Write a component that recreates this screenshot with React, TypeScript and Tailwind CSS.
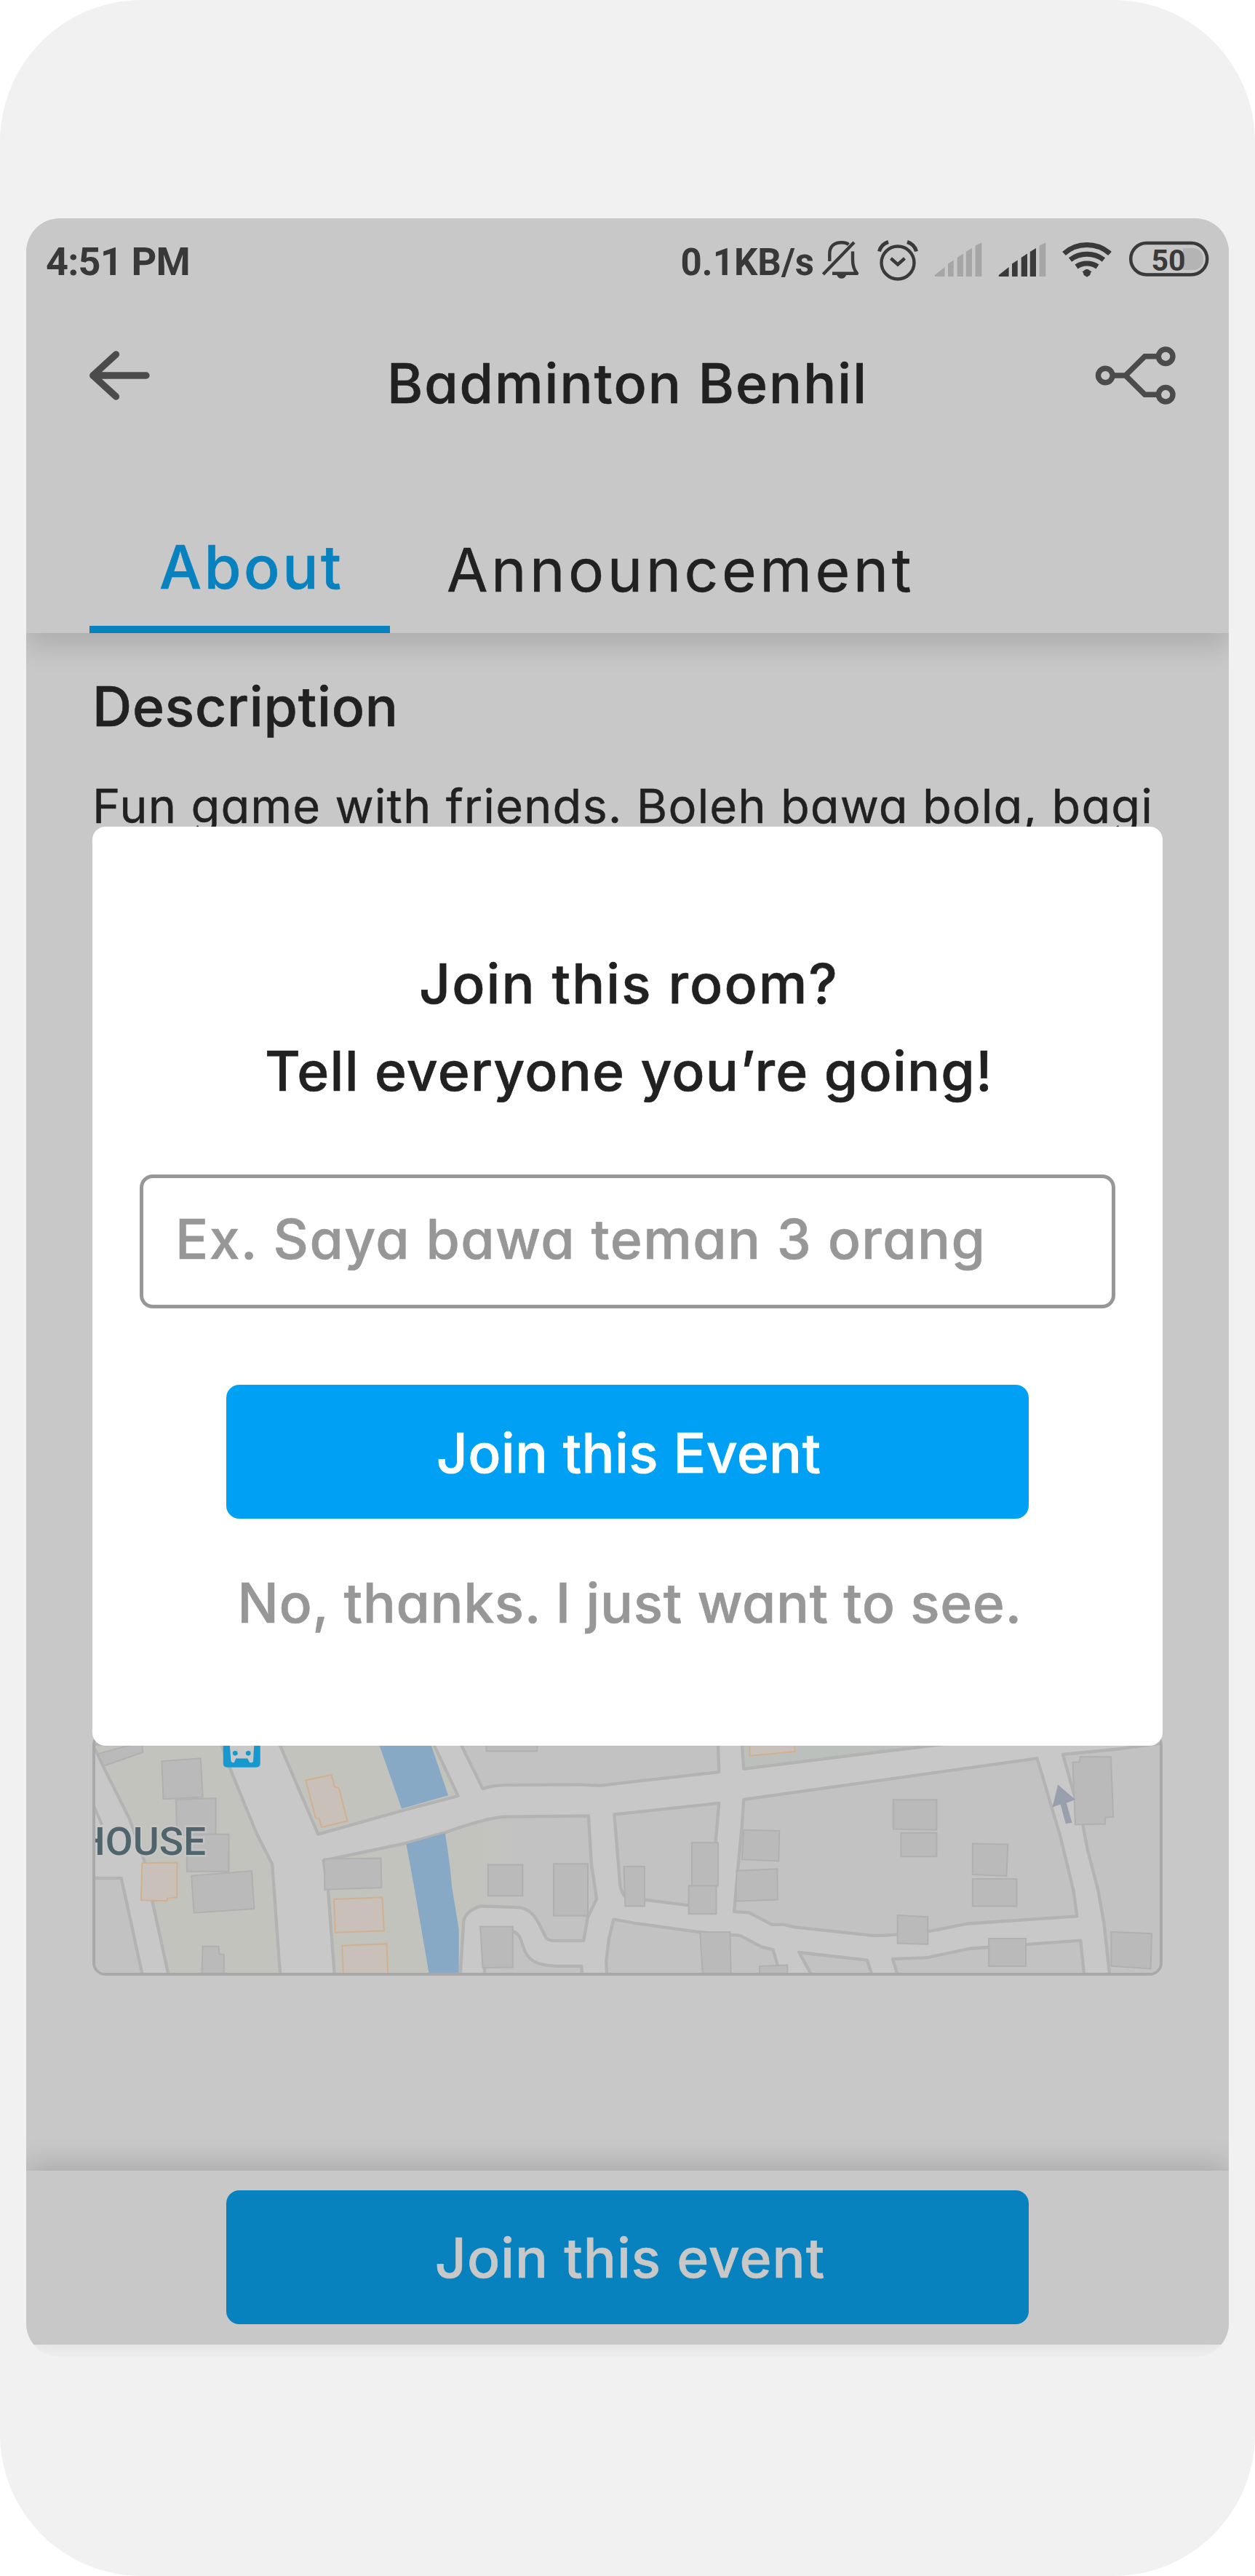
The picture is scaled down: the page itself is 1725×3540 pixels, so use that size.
import type { ReactNode } from "react";

const SANS = "font-['Inter',sans-serif] [font-feature-settings:'cv11'] whitespace-nowrap";
const MEDIUM = "font-medium [-webkit-text-stroke:0.6px_currentColor]";

function BellOff() {
  return (
    <svg className="h-16 w-14" viewBox="0 0 56 64" fill="none" stroke="#3a3a3a" strokeWidth="4.400">
      <path d="M12.3 31V21C12.3 10 19 5.2 28.8 5.2C33 5.2 36 6 38.5 8" />
      <path d="M44 17.5V29C44 38 46 43 50 47.7H16" strokeLinejoin="round" />
      <path d="M3.4 49L46 5" />
      <path d="M22 49.5H35.500C34 53 32 54.700 28.800 54.700C25.500 54.700 23.500 53 22 49.500Z" fill="#3a3a3a" stroke="none" />
    </svg>
  );
}

function Alarm() {
  return (
    <svg className="h-16 w-15" viewBox="0 0 60 64" fill="none" stroke="#3a3a3a" strokeWidth="4.400">
      <circle cx="30" cy="33" r="22.500" />
      <path d="M20.500 27L30 35.500L39.500 27" />
      <path d="M4.500 17.500C6 11.500 10.500 6.500 17 4.500M55.500 17.500C54 11.500 49.500 6.500 43 4.500" strokeWidth="5" />
    </svg>
  );
}

const SIGNAL_BARS = [
  "M0.8 52V50L14.600 39V52Z",
  "M19 52V34.500L26.700 29.500V52Z",
  "M31.700 52V26L40 20.500V52Z",
  "M43.800 52V18L52 13V52Z",
  "M56.500 52V9.500L65.400 5.500V52Z",
];

function Signal({ active }: { active: number }) {
  return (
    <svg className="h-16 w-17" viewBox="0 0 68 64">
      {SIGNAL_BARS.map((d, i) => (
        <path key={d} d={d} fill={i < active ? "#3a3a3a" : "#a6a6a6"} />
      ))}
    </svg>
  );
}

function Wifi() {
  return (
    <svg className="h-16 w-18" viewBox="0 0 72 64" fill="none" stroke="#3a3a3a" strokeWidth="7">
      <path d="M4.500 20.500C22 4.500 50 4.500 67.500 20.500" />
      <path d="M13 29C26.500 18.800 45.500 18.800 59 29" />
      <path d="M21.500 38.500C30 32.600 42 32.600 50.500 38.500" />
      <path d="M29.500 45C33.500 43.200 38.500 43.200 42.500 45L36 53Z" fill="#3a3a3a" stroke="none" />
      <circle cx="36" cy="47" r="5" fill="#3a3a3a" stroke="none" />
    </svg>
  );
}

function Battery() {
  return (
    <svg className="h-16 w-[114px]" viewBox="0 0 114 64">
      <path d="M76 13H90C99 13 104 20 104 28S99 43 90 43H76Z" fill="#b4b4b4" />
      <rect x="4.200" y="6" width="105" height="43.500" rx="21.700" fill="none" stroke="#3a3a3a" strokeWidth="4.500" />
      <text x="56" y="43.500" textAnchor="middle" fontSize="41" fontWeight="700" fill="#3a3a3a" className="font-['Roboto',sans-serif]">
        50
      </text>
    </svg>
  );
}

function StatusBar() {
  return (
    <div className="flex h-[120px] items-center pl-[27px] pr-[25px] font-['Roboto',sans-serif] font-bold text-[#383838]">
      <span className="text-[54px] leading-none tracking-[-0.8px]">4:51 PM</span>
      <span className="ml-auto text-[51px] leading-none">0.1KB/s</span>
      <div className="ml-[9px] flex items-center gap-5">
        <BellOff />
        <Alarm />
        <Signal active={0} />
        <Signal active={4} />
      </div>
      <div className="ml-[18px] flex items-center gap-5">
        <Wifi />
        <Battery />
      </div>
    </div>
  );
}

function Header() {
  return (
    <header className="relative z-10 h-[570px] shrink-0 bg-[#c8c8c8] shadow-[0_18px_37px_rgba(0,0,0,0.14)]">
      <StatusBar />
      <div className="flex h-[192px] items-center pl-[84px] pr-[69px]">
        <svg className="h-20 w-[92px]" viewBox="0 0 92 80" fill="none" stroke="#4b4b4b" strokeWidth="9.300" strokeLinecap="round" strokeLinejoin="round">
          <path d="M39.500 11L7.700 40L39.500 69M8 40H81" />
        </svg>
        <h1 className={`${SANS} ${MEDIUM} ml-[320px] pt-[20px] text-[75px] leading-none tracking-[2px] text-[#212121]`}>
          Badminton Benhil
        </h1>
        <svg className="ml-auto h-[90px] w-[120px]" viewBox="0 0 120 90" fill="none" stroke="#4b4b4b" strokeWidth="7.400">
          <circle cx="19.300" cy="45" r="9.800" />
          <circle cx="102.200" cy="18.800" r="9.800" />
          <circle cx="102.200" cy="71.200" r="9.800" />
          <path d="M29 45H47L73.500 18.800H92M47 45L73.500 71.200H92" />
        </svg>
      </div>
      <nav className={`${SANS} flex h-[258px] pl-[87px] text-[82px] leading-[100px]`}>
        <div className={`${MEDIUM} w-[413px] border-b-10 border-[#0882be] pt-[118px] pl-[96px] tracking-[3.6px] text-[#0882be]`}>
          About
        </div>
        <div className="pt-[122px] pl-[78px] tracking-[4.5px] text-[#212121] [-webkit-text-stroke:0.5px_currentColor]">Announcement</div>
      </nav>
    </header>
  );
}

function Shapes({ list, fill, stroke }: { list: string[]; fill: string; stroke: string }) {
  return (
    <>
      {list.map((points) => (
        <polygon key={points} points={points} fill={fill} stroke={stroke} strokeWidth="2" vectorEffect="non-scaling-stroke" />
      ))}
    </>
  );
}

const BLOCKS: [string, string][] = [
  ["M30 40L45 66L65 130L140 350L182 525L205 695L252 1010H568L545 540L500 410L428 150L400 40Z", "#c3c3bd"],
  ["M20 598H117L178 1010H20Z", "#c2c2c2"],
  ["M566 40L675 415L910 318L1072 255L1003 40Z", "#c3c3bd"],
  ["M1080 40L1142 225Q1170 212 1200 210L1420 208L1475 212L1547 199L1812 155L1809 40Z", "#c2c2c2"],
  ["M1877 40L1882 142L2200 84L2500 30Z", "#bcc0bd"],
  ["M2787 82L2817 240L2844 380L2857 480L2887 650L2904 790L2920 1010H3090V30L2940 60Z", "#c2c2c2"],
  ["M1882 270L2714 98L2779 420L2817 650L2827 757L2517 788L2407 820Q2320 838 2247 838L2027 803L1997 792H1962L1897 742L1855 738L1865 565L1877 380Z", "#c2c2c2"],
  ["M690 525L925 452L1035 408Q1140 352 1200 342L1442 338L1450 540L1465 685L1440 760L1428 860H1350Q1328 860 1322 848L1300 785Q1278 722 1240 720L1135 715Q1095 735 1088 775L1078 1010H722L703 640Z", "url(#park)"],
  ["M1148 1010L1140 810L1227 820Q1243 825 1250 855Q1262 920 1280 938Q1300 962 1350 965H1422L1424 1010Z", "#c2c2c2"],
  ["M1515 332L1570 324L1812 285L1802 450L1800 720L1727 712L1607 690L1545 675Q1532 650 1531 620Z", "#c2c2c2"],
  ["M1513 770L1570 785L1747 822L1872 838L1932 885L1965 897L1988 1010H1494L1492 945L1500 850Z", "#c2c2c2"],
  ["M2039 908L2232 940L2247 1010H2077Z", "#c2c2c2"],
  ["M2304 935L2402 930L2522 892L2837 858L2848 1010H2320Z", "#c2c2c2"],
];

const BUILDINGS = [
  "50,80 175,30 178,73 68,130",
  "232,110 342,98 348,260 236,268",
  "272,270 385,264 385,415 275,420",
  "303,415 422,415 422,570 303,570",
  "316,588 487,568 494,726 323,743",
  "348,883 393,883 395,915 408,917 408,1010 345,1010",
  "692,518 853,515 855,638 694,646",
  "1157,542 1255,542 1255,672 1157,672",
  "1343,538 1440,538 1440,755 1343,755",
  "1135,800 1227,800 1227,970 1142,972",
  "1152,30 1296,30 1296,68 1152,68",
  "1542,550 1601,550 1601,715 1546,715",
  "1735,450 1809,450 1809,630 1735,630",
  "1726,630 1804,630 1804,748 1726,748",
  "1882,397 1983,401 1981,527 1877,520",
  "1862,567 1977,560 1978,688 1860,694",
  "2306,271 2429,271 2429,397 2306,393",
  "2328,409 2429,409 2429,508 2328,508",
  "2531,454 2631,457 2627,589 2531,583",
  "2531,601 2656,601 2656,715 2531,715",
  "2318,753 2404,760 2404,874 2318,870",
  "2577,850 2682,850 2682,966 2577,966",
  "2924,822 3039,830 3036,976 2924,965",
  "2815,115 2834,113 2836,92 2923,92 2930,343 2907,345 2907,372 2822,375",
  "1758,823 1843,823 1846,1010 1766,1010",
  "1927,966 2006,961 2006,1010 1927,1010",
];

const SHOPS = [
  "640,190 713,167 722,218 734,222 758,360 685,386 678,350 668,347",
  "176,535 275,533 275,678 248,682 246,693 173,690",
  "720,686 857,678 862,818 724,825",
  "743,880 870,872 873,1010 747,1010",
  "1899,30 2027,30 2027,70 1899,88",
];

function CityMap() {
  return (
    <div className="h-[335px] w-[1471px] overflow-hidden rounded-[18px] border-4 border-[#a9a9a9]">
      <svg className="block h-full w-full" viewBox="43.300 0 3018.200 993" preserveAspectRatio="none">
        <defs>
          <linearGradient id="park" gradientUnits="userSpaceOnUse" x1="1130" x2="1230" y1="400" y2="400">
            <stop offset="0" stopColor="#c3c3bd" />
            <stop offset="1" stopColor="#c2c2c2" />
          </linearGradient>
        </defs>
        <rect x="0" y="0" width="3100" height="1000" fill="#c8c8c8" />
        {BLOCKS.map(([d, fill]) => (
          <path key={d} d={d} fill={fill} stroke="#b3b3b3" strokeWidth="4.300" strokeLinejoin="round" vectorEffect="non-scaling-stroke" />
        ))}
        <path d="M40 300L62 375" stroke="#b3b3b3" strokeWidth="4" vectorEffect="non-scaling-stroke" />
        <path d="M848 40L912 308L1044 253L995 40Z" fill="#88a9c6" />
        <path d="M925 456L1035 410Q1048 520 1055 640L1074 810V1010H991L948 640Z" fill="#88a9c6" />
        <Shapes list={BUILDINGS} fill="#bababa" stroke="#b0b0b0" />
        <Shapes list={SHOPS} fill="#c9c0b9" stroke="#d0b08f" />
        <path d="M406 30H511V120Q511 136 497 136H420Q406 136 406 120Z" fill="#1799cf" />
        <path d="M424 30H494L491 112Q489 118 481 116L475 99H442L437 116Q430 117 428 110Z" fill="#c8c8c8" />
        <ellipse cx="440" cy="77" rx="7" ry="10" fill="#1799cf" />
        <ellipse cx="477" cy="77" rx="7" ry="10" fill="#1799cf" />
        <path d="M2773 208L2822 270L2797 285L2813 367L2795 371L2780 290L2757 303Z" fill="#9a9fae" />
        <g transform="translate(357 500) scale(2.063 3)">
          <text textAnchor="end" fontSize="55" fontWeight="500" fill="#50646c" stroke="#c8c8c8" strokeWidth="5" strokeOpacity="0.7" paintOrder="stroke" className="font-['Roboto',sans-serif]">
            HOUSE
          </text>
        </g>
      </svg>
    </div>
  );
}

function PrimaryButton({ className, children }: { className: string; children: ReactNode }) {
  return (
    <button className={`${SANS} ${MEDIUM} flex h-[184px] w-[1103px] shrink-0 items-center justify-center rounded-[18px] text-[75px] leading-none ${className}`}>
      {children}
    </button>
  );
}

function JoinDialog() {
  return (
    <div className={`${SANS} ${MEDIUM} absolute top-[1136px] left-[127px] flex h-[1263px] w-[1471px] flex-col items-center rounded-[18px] bg-white pt-[156px] text-[75px] text-[#212121]`}>
      <h2 className="pl-1 text-center leading-[120px]">
        <div className="tracking-[2px]">Join this room?</div>
        <div className="tracking-[1.2px]">Tell everyone you’re going!</div>
      </h2>
      <div className="mt-[82px] flex h-[184px] w-[1341px] items-center rounded-[18px] border-[5px] border-[#979797] pb-[8px] pl-[44px] leading-none tracking-[1.4px] text-[#979797]">
        Ex. Saya bawa teman 3 orang
      </div>
      <PrimaryButton className="mt-[105px] bg-[#00a1f4] pt-[2px] pl-[3px] tracking-[0.3px] text-white">Join this Event</PrimaryButton>
      <div className="mt-[66px] pl-[6px] leading-[100px] tracking-[0.6px] text-[#979797]">No, thanks. I just want to see.</div>
    </div>
  );
}

export default function App() {
  return (
    <div className="h-[3540px] w-[1725px] bg-white">
      <div className="relative h-full w-full rounded-[195px] bg-[#f1f1f1] pt-[300px] pl-9">
        <div className="flex h-[2939px] w-[1653px] flex-col overflow-hidden rounded-[46px]">
          <Header />
          <main className={`${SANS} h-[2113px] shrink-0 bg-[#c8c8c8] pt-[51px] pl-[91px] text-[#212121]`}>
            <h2 className={`${MEDIUM} text-[75px] leading-[100px] tracking-[0.8px]`}>Description</h2>
            <p className="mt-[37px] mb-[1222px] text-[65px] leading-[100px] tracking-[1.05px] [-webkit-text-stroke:0.4px_currentColor]">
              Fun game with friends. Boleh bawa bola, bagi
            </p>
            <CityMap />
          </main>
          <footer className="relative z-10 flex h-[239px] shrink-0 justify-center bg-[#c8c8c8] pt-[27px] shadow-[0_-9px_37px_rgba(0,0,0,0.16)]">
            <PrimaryButton className="bg-[#0882be] pt-[1px] pl-[7px] tracking-[1px] text-[#c8c8c8]">Join this event</PrimaryButton>
          </footer>
        </div>
        <JoinDialog />
      </div>
    </div>
  );
}
